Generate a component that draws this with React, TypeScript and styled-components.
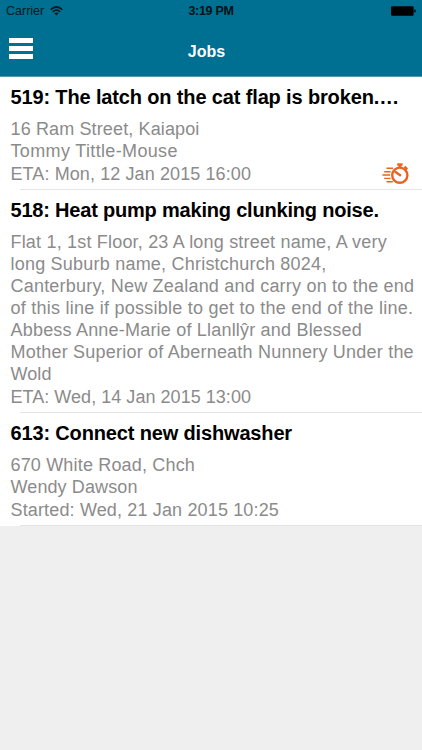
import React from "react";
import styled, { createGlobalStyle } from "styled-components";

const GlobalStyle = createGlobalStyle`
  * { box-sizing: border-box; }
  body {
    margin: 0;
    background: #efefef;
    font-family: "Liberation Sans", Arial, sans-serif;
  }
`;

const Screen = styled.main`
  display: flex;
  flex-direction: column;
  width: 422px;
  height: 750px;
  overflow: hidden;
  background: #efefef;
`;

const Header = styled.header`
  height: 77px;
  flex: none;
  background: #007092;
  border-bottom: 1px solid #5597ae;
`;

const StatusBar = styled.div`
  display: grid;
  grid-template-columns: 1fr auto 1fr;
  align-items: center;
  height: 22px;
  padding: 0 6px 0 6px;
  color: #06191f;
  font-size: 12.5px;
`;

const Carrier = styled.div`
  display: flex;
  align-items: center;
  gap: 6px;
  letter-spacing: 0;
`;

const Clock = styled.time`
  font-weight: 600;
  letter-spacing: -0.3px;
  color: #001016;
`;

const BatterySlot = styled.div`
  display: flex;
  justify-content: flex-end;
`;

const NavBar = styled.nav`
  display: grid;
  grid-template-columns: 1fr auto 1fr;
  align-items: center;
  height: 54px;
  padding: 0 17px 0 8px;
`;

const MenuButton = styled.button`
  display: flex;
  flex-direction: column;
  gap: 3px;
  width: 25px;
  margin: 0 0 1px;
  padding: 0;
  border: 0;
  background: none;
`;

const MenuBar = styled.span`
  height: 5px;
  width: 24px;
  margin-left: 0.5px;
  background: #fff;
`;

const NavTitle = styled.h1`
  margin: 5px 0 0;
  font-size: 16px;
  font-weight: 600;
  line-height: 20px;
  color: #fff;
`;

const JobList = styled.ul`
  margin: 0;
  padding: 0;
  list-style: none;
  background: #fff;
`;

const JobItem = styled.li<{ $tall?: boolean }>`
  display: flex;
  flex-direction: column;
  height: ${(p) => (p.$tall ? 223 : 113)}px;
  padding: 9px 0 0 10.5px;

  &::after {
    content: "";
    height: 1px;
    flex: none;
    margin: auto 0 0 9.5px;
    background: #e4e4e5;
  }
`;

const JobTitle = styled.h2<{ $spacing: number }>`
  margin: 0 0 9px;
  font-size: 20px;
  font-weight: 600;
  line-height: 23px;
  letter-spacing: ${(p) => p.$spacing}px;
  white-space: nowrap;
  color: #000;
`;

const Details = styled.div`
  display: flex;
  flex-direction: column;
  gap: 0.4px;
`;

const Field = styled.div`
  color: #8b8b8b;
  font-size: 18px;
  line-height: 22px;
  white-space: nowrap;
`;

const Line = styled.span<{ $spacing: number }>`
  display: block;
  letter-spacing: ${(p) => p.$spacing}px;
`;

const LastRow = styled.div`
  display: flex;
  justify-content: space-between;
  align-items: center;
  height: 22px;
  padding-right: 12px;
`;

type TextLine = [text: string, spacing: number];

interface Job {
  title: TextLine;
  address: TextLine[];
  client: TextLine[];
  time: TextLine;
  urgent?: boolean;
  tall?: boolean;
}

const jobs: Job[] = [
  {
    title: ["519: The latch on the cat flap is broken.…", -0.144],
    address: [["16 Ram Street, Kaiapoi", 0.132]],
    client: [["Tommy Tittle-Mouse", 0.35]],
    time: ["ETA: Mon, 12 Jan 2015 16:00", 0.099],
    urgent: true,
  },
  {
    title: ["518: Heat pump making clunking noise.", -0.2],
    address: [
      ["Flat 1, 1st Floor, 23 A long street name, A very", 0.19],
      ["long Suburb name, Christchurch 8024,", 0.217],
      ["Canterbury, New Zealand and carry on to the end", 0.21],
      ["of this line if possible to get to the end of the line.", 0.245],
    ],
    client: [
      ["Abbess Anne-Marie of Llanllŷr and Blessed", 0.2],
      ["Mother Superior of Aberneath Nunnery Under the", 0.22],
      ["Wold", 0.079],
    ],
    time: ["ETA: Wed, 14 Jan 2015 13:00", 0.037],
    tall: true,
  },
  {
    title: ["613: Connect new dishwasher", -0.153],
    address: [["670 White Road, Chch", 0.17]],
    client: [["Wendy Dawson", 0.106]],
    time: ["Started: Wed, 21 Jan 2015 10:25", 0.15],
  },
];

const WifiIcon = () => (
  <svg width="13" height="10" viewBox="0 0 13 10" fill="none" stroke="#06191f" strokeWidth="1.8">
    <path d="M0.8 3.7 Q6.5 -1.7 12.2 3.7" />
    <path d="M2.9 5.8 Q6.5 2.5 10.1 5.8" />
    <path d="M6.5 9.4 L4.5 7.4 Q6.5 5.7 8.5 7.4 Z" fill="#06191f" stroke="none" />
  </svg>
);

const BatteryIcon = () => (
  <svg width="25" height="10" viewBox="0 0 25 10">
    <rect x="0" y="0.2" width="22.6" height="9.6" rx="1" fill="#000" />
    <path d="M23.3 3.3 Q25 3.7 25 5 Q25 6.3 23.3 6.7 Z" fill="#000" />
  </svg>
);

const StopwatchIcon = () => (
  <svg width="28" height="22" viewBox="0 0 28 22" fill="none" stroke="#e8641f">
    <circle cx="17.8" cy="12.2" r="7.6" strokeWidth="2.4" />
    <path d="M15.2 1.5 H20.6" strokeWidth="2.4" />
    <path d="M17.9 2 V5" strokeWidth="3" />
    <path d="M22.5 3.6 L25.2 6.3" strokeWidth="2.4" />
    <path d="M13.5 9.1 L18.2 12.2" strokeWidth="2.4" strokeLinecap="round" />
    <path d="M4.5 5.2 H11 M2.2 8.7 H8.6 M0.4 12 H8 M2.2 15.4 H8.6 M4.5 18.7 H10.8" strokeWidth="1.4" />
  </svg>
);

const Lines = ({ lines }: { lines: TextLine[] }) => (
  <Field>
    {lines.map(([text, spacing]) => (
      <Line key={text} $spacing={spacing}>
        {text}
      </Line>
    ))}
  </Field>
);

export default function App() {
  return (
    <Screen>
      <GlobalStyle />
      <Header>
        <StatusBar>
          <Carrier>
            Carrier <WifiIcon />
          </Carrier>
          <Clock>3:19 PM</Clock>
          <BatterySlot>
            <BatteryIcon />
          </BatterySlot>
        </StatusBar>
        <NavBar>
          <MenuButton aria-label="Menu">
            <MenuBar />
            <MenuBar />
            <MenuBar />
          </MenuButton>
          <NavTitle>Jobs</NavTitle>
        </NavBar>
      </Header>
      <JobList>
        {jobs.map((job) => (
          <JobItem key={job.title[0]} $tall={job.tall}>
            <JobTitle $spacing={job.title[1]}>{job.title[0]}</JobTitle>
            <Details>
              <Lines lines={job.address} />
              <Lines lines={job.client} />
              <LastRow>
                <Lines lines={[job.time]} />
                {job.urgent && <StopwatchIcon />}
              </LastRow>
            </Details>
          </JobItem>
        ))}
      </JobList>
    </Screen>
  );
}
